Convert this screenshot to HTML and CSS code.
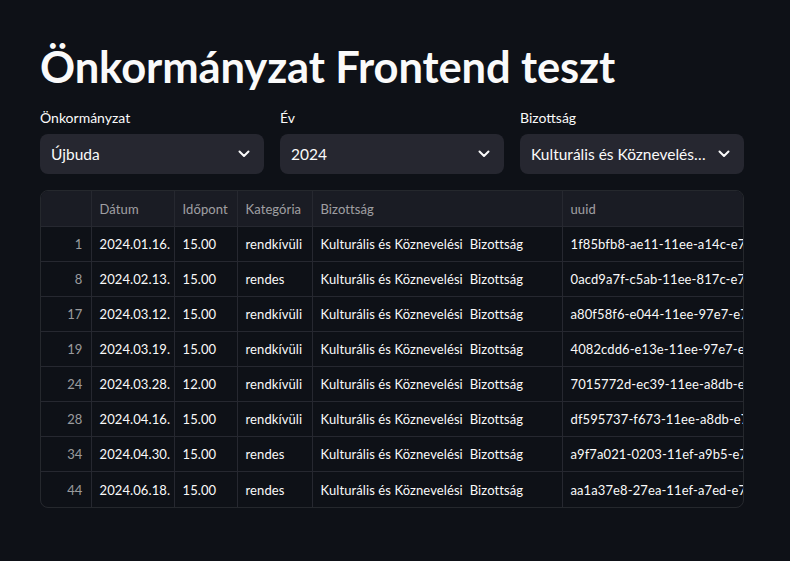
FILE: index.html
```html
<!DOCTYPE html>
<html lang="hu">
<head>
<meta charset="utf-8">
<title>Önkormányzat Frontend teszt</title>
<link rel="stylesheet" href="styles.css">
</head>
<body>
<main class="app">
  <h1 class="title">Önkormányzat Frontend teszt</h1>
  <div class="filters">
    <div class="field">
      <label class="label">Önkormányzat</label>
      <div class="select"><span class="value">Újbuda</span>
        <svg class="chev" viewBox="0 0 12 8" width="12" height="8"><path d="M1.5 1.5 L6 6 L10.5 1.5" fill="none" stroke="#fafafa" stroke-width="2" stroke-linecap="round" stroke-linejoin="round"/></svg>
      </div>
    </div>
    <div class="field">
      <label class="label">Év</label>
      <div class="select"><span class="value">2024</span>
        <svg class="chev" viewBox="0 0 12 8" width="12" height="8"><path d="M1.5 1.5 L6 6 L10.5 1.5" fill="none" stroke="#fafafa" stroke-width="2" stroke-linecap="round" stroke-linejoin="round"/></svg>
      </div>
    </div>
    <div class="field">
      <label class="label">Bizottság</label>
      <div class="select"><span class="value">Kulturális és Köznevelési  Bizottság</span>
        <svg class="chev" viewBox="0 0 12 8" width="12" height="8"><path d="M1.5 1.5 L6 6 L10.5 1.5" fill="none" stroke="#fafafa" stroke-width="2" stroke-linecap="round" stroke-linejoin="round"/></svg>
      </div>
    </div>
  </div>
  <div class="grid-wrap">
    <table class="grid">
      <colgroup>
        <col class="c-idx"><col class="c-date"><col class="c-time"><col class="c-cat"><col class="c-biz"><col class="c-uuid">
      </colgroup>
      <thead>
        <tr><th></th><th>Dátum</th><th>Időpont</th><th>Kategória</th><th>Bizottság</th><th>uuid</th></tr>
      </thead>
      <tbody>
        <tr><td class="idx">1</td><td>2024.01.16.</td><td>15.00</td><td>rendkívüli</td><td>Kulturális és Köznevelési&nbsp; Bizottság</td><td>1f85bfb8-ae11-11ee-a14c-e70a3c1d2b44</td></tr>
        <tr><td class="idx">8</td><td>2024.02.13.</td><td>15.00</td><td>rendes</td><td>Kulturális és Köznevelési&nbsp; Bizottság</td><td>0acd9a7f-c5ab-11ee-817c-e70a3c1d2b44</td></tr>
        <tr><td class="idx">17</td><td>2024.03.12.</td><td>15.00</td><td>rendkívüli</td><td>Kulturális és Köznevelési&nbsp; Bizottság</td><td>a80f58f6-e044-11ee-97e7-e70a3c1d2b44</td></tr>
        <tr><td class="idx">19</td><td>2024.03.19.</td><td>15.00</td><td>rendkívüli</td><td>Kulturális és Köznevelési&nbsp; Bizottság</td><td>4082cdd6-e13e-11ee-97e7-e70a3c1d2b44</td></tr>
        <tr><td class="idx">24</td><td>2024.03.28.</td><td>12.00</td><td>rendkívüli</td><td>Kulturális és Köznevelési&nbsp; Bizottság</td><td>7015772d-ec39-11ee-a8db-e70a3c1d2b44</td></tr>
        <tr><td class="idx">28</td><td>2024.04.16.</td><td>15.00</td><td>rendkívüli</td><td>Kulturális és Köznevelési&nbsp; Bizottság</td><td>df595737-f673-11ee-a8db-e70a3c1d2b44</td></tr>
        <tr><td class="idx">34</td><td>2024.04.30.</td><td>15.00</td><td>rendes</td><td>Kulturális és Köznevelési&nbsp; Bizottság</td><td>a9f7a021-0203-11ef-a9b5-e70a3c1d2b44</td></tr>
        <tr><td class="idx">44</td><td>2024.06.18.</td><td>15.00</td><td>rendes</td><td>Kulturális és Köznevelési&nbsp; Bizottság</td><td>aa1a37e8-27ea-11ef-a7ed-e70a3c1d2b44</td></tr>
      </tbody>
    </table>
  </div>
</main>
</body>
</html>
```

FILE: styles.css
```css
html, body {
  margin: 0;
  padding: 0;
  background: #0e1117;
  color: #fafafa;
  font-family: "Lato", "Noto Sans", sans-serif;
}
.app {
  padding: 36px 46px 40px 40px;
  width: 704px;
}
.title {
  margin: 0;
  font-size: 43.5px;
  font-weight: 700;
  line-height: 60px;
  letter-spacing: -0.1px;
  color: #fafafa;
}
.filters {
  display: flex;
  gap: 16px;
  margin-top: 12px;
}
.field {
  flex: 1 1 0;
  min-width: 0;
  display: flex;
  flex-direction: column;
}
.label {
  font-size: 14px;
  line-height: 20px;
  height: 20px;
  margin-bottom: 6px;
  color: #fafafa;
}
.select {
  height: 40px;
  background: #262730;
  border-radius: 8px;
  display: flex;
  align-items: center;
  padding: 0 14px 0 11px;
  gap: 12px;
}
.value {
  flex: 1 1 auto;
  min-width: 0;
  font-size: 15.5px;
  white-space: nowrap;
  overflow: hidden;
  text-overflow: ellipsis;
}
.chev { flex: none; }
.grid-wrap {
  margin-top: 16px;
  border: 1px solid rgba(250,250,250,0.1);
  border-radius: 8px;
  overflow: hidden;
  width: 702px;
}
.grid {
  border-collapse: collapse;
  table-layout: fixed;
  width: 840px;
  font-size: 13px;
  letter-spacing: 0.1px;
}
.c-idx { width: 50px; }
.c-date { width: 83px; }
.c-time { width: 63px; }
.c-cat { width: 75px; }
.c-biz { width: 250px; }
.c-uuid { width: 319px; }
.grid th, .grid td {
  border-right: 1px solid #262830;
  border-bottom: 1px solid #262830;
  padding: 0 8px;
  text-align: left;
  white-space: nowrap;
  overflow: hidden;
}
.grid th {
  height: 35px;
  background: #1a1c24;
  font-weight: 400;
  color: rgba(250,250,250,0.6);
}
.grid td {
  height: 34px;
  color: #fafafa;
}
.grid tbody tr:last-child td { border-bottom: none; height: 35px; }
.grid td.idx {
  text-align: right;
  color: rgba(250,250,250,0.6);
}
```
